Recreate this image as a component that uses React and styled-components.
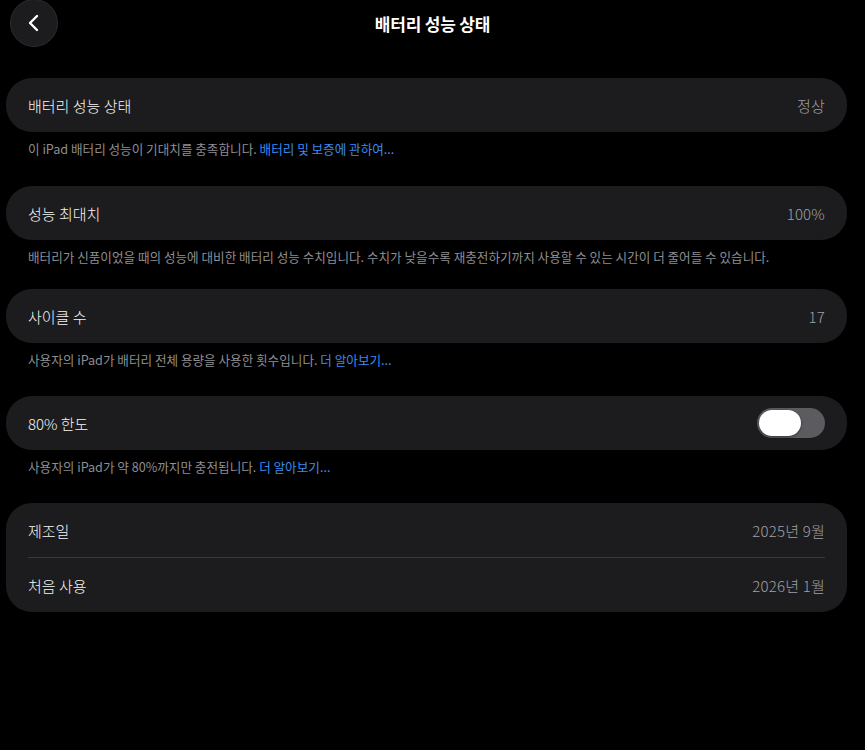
import React, { useState } from 'react';
import styled, { createGlobalStyle } from 'styled-components';

const GlobalStyle = createGlobalStyle`
  html, body {
    margin: 0;
    padding: 0;
    background: #000;
  }
  body {
    font-family: "Noto Sans CJK KR", "Noto Sans", "Liberation Sans", sans-serif;
    color: #fff;
    -webkit-font-smoothing: antialiased;
  }
`;

const Page = styled.div`
  width: 865px;
  height: 750px;
  background: #000;
  overflow: hidden;
`;

const Header = styled.div`
  position: relative;
  height: 46px;
  display: flex;
  align-items: center;
  justify-content: center;
`;

const BackButton = styled.button`
  position: absolute;
  left: 10px;
  top: -1px;
  width: 48px;
  height: 48px;
  border-radius: 50%;
  border: 1px solid #2c2c2e;
  background: #1c1c1e;
  display: flex;
  align-items: center;
  justify-content: center;
  padding: 0;
  cursor: pointer;
`;

const Title = styled.h1`
  margin: 0;
  font-size: 17px;
  font-weight: 700;
  color: #fff;
  letter-spacing: -0.2px;
`;

const List = styled.div`
  padding: 32px 18px 0 6px;
`;

const Section = styled.div`
  margin-bottom: ${(p) => p.$gap ?? 28}px;
`;

const Card = styled.div`
  background: #1c1c1e;
  border-radius: 26px;
  padding: 0 22px;
`;

const Row = styled.div`
  height: 54px;
  display: flex;
  align-items: center;
  justify-content: space-between;
  & + & {
    border-top: 1px solid #38383a;
  }
`;

const Label = styled.span`
  font-size: 15px;
  font-weight: 300;
  color: #f5f5f5;
`;

const Value = styled.span`
  font-size: 15px;
  font-weight: 300;
  color: #a0a0a5;
  letter-spacing: 0.2px;
`;

const Footer = styled.p`
  margin: 0;
  padding: 9px 22px 0;
  font-size: 12.6px;
  font-weight: 400;
  line-height: 16px;
  color: #8e8e93;
`;

const Link = styled.a`
  color: #3a8bf2;
  text-decoration: none;
`;

const Track = styled.button`
  width: 68px;
  height: 30px;
  border-radius: 15px;
  border: none;
  padding: 2px;
  background: ${(p) => (p.$on ? '#34c759' : '#5b5b60')};
  display: flex;
  justify-content: ${(p) => (p.$on ? 'flex-end' : 'flex-start')};
  cursor: pointer;
`;

const Knob = styled.span`
  width: 42px;
  height: 26px;
  border-radius: 13px;
  background: #fff;
  box-shadow: 0 1px 3px rgba(0, 0, 0, 0.4);
`;

export default function App() {
  const [limit, setLimit] = useState(false);

  return (
    <Page>
      <GlobalStyle />
      <Header>
        <BackButton aria-label="뒤로">
          <svg width="16" height="20" viewBox="0 0 16 20" fill="none">
            <path
              d="M11 3 L4 10 L11 17"
              stroke="#fff"
              strokeWidth="2.4"
              strokeLinecap="round"
              strokeLinejoin="round"
            />
          </svg>
        </BackButton>
        <Title>배터리 성능 상태</Title>
      </Header>

      <List>
        <Section $gap={29}>
          <Card>
            <Row>
              <Label>배터리 성능 상태</Label>
              <Value>정상</Value>
            </Row>
          </Card>
          <Footer>
            이 iPad 배터리 성능이 기대치를 충족합니다. <Link>배터리 및 보증에 관하여...</Link>
          </Footer>
        </Section>

        <Section $gap={24}>
          <Card>
            <Row>
              <Label>성능 최대치</Label>
              <Value>100%</Value>
            </Row>
          </Card>
          <Footer>
            배터리가 신품이었을 때의 성능에 대비한 배터리 성능 수치입니다. 수치가 낮을수록 재충전하기까지 사용할 수 있는 시간이 더 줄어들 수 있습니다.
          </Footer>
        </Section>

        <Section $gap={28}>
          <Card>
            <Row>
              <Label>사이클 수</Label>
              <Value>17</Value>
            </Row>
          </Card>
          <Footer>
            사용자의 iPad가 배터리 전체 용량을 사용한 횟수입니다. <Link>더 알아보기...</Link>
          </Footer>
        </Section>

        <Section $gap={28}>
          <Card>
            <Row>
              <Label>80% 한도</Label>
              <Track $on={limit} onClick={() => setLimit(!limit)}>
                <Knob />
              </Track>
            </Row>
          </Card>
          <Footer>
            사용자의 iPad가 약 80%까지만 충전됩니다. <Link>더 알아보기...</Link>
          </Footer>
        </Section>

        <Section>
          <Card>
            <Row>
              <Label>제조일</Label>
              <Value>2025년 9월</Value>
            </Row>
            <Row>
              <Label>처음 사용</Label>
              <Value>2026년 1월</Value>
            </Row>
          </Card>
        </Section>
      </List>
    </Page>
  );
}
